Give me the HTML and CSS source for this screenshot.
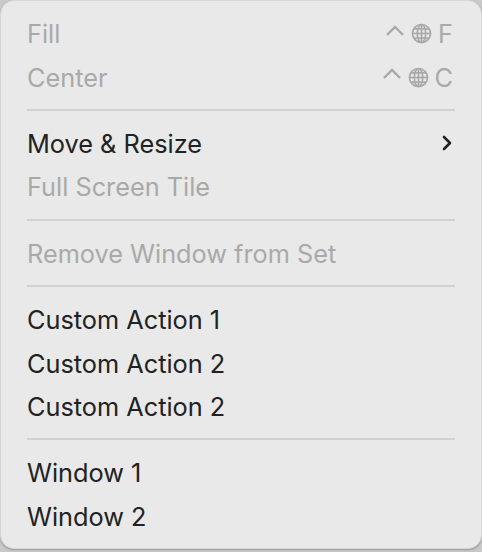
FILE: index.html
```html
<!DOCTYPE html>
<html lang="en">
<head>
  <meta charset="UTF-8">
  <title>Window menu</title>
  <link rel="stylesheet" href="styles.css">
</head>
<body>
  <!-- Context menu -->
  <div class="menu">
    <div class="menu-item disabled">
      <span class="label">Fill</span>
      <span class="shortcut">
        <svg class="caret" viewBox="0 0 20 12"><polyline points="2,10 10,2 18,10"/></svg>
        <svg class="globe" viewBox="0 0 20 20"><circle cx="10" cy="10" r="8.6"/><ellipse cx="10" cy="10" rx="4" ry="8.6"/><line x1="10" y1="1.4" x2="10" y2="18.6"/><line x1="1.4" y1="10" x2="18.6" y2="10"/><line x1="2.8" y1="5.6" x2="17.2" y2="5.6"/><line x1="2.8" y1="14.4" x2="17.2" y2="14.4"/></svg>
        <span class="key">F</span>
      </span>
    </div>
    <div class="menu-item disabled">
      <span class="label">Center</span>
      <span class="shortcut">
        <svg class="caret" viewBox="0 0 20 12"><polyline points="2,10 10,2 18,10"/></svg>
        <svg class="globe" viewBox="0 0 20 20"><circle cx="10" cy="10" r="8.6"/><ellipse cx="10" cy="10" rx="4" ry="8.6"/><line x1="10" y1="1.4" x2="10" y2="18.6"/><line x1="1.4" y1="10" x2="18.6" y2="10"/><line x1="2.8" y1="5.6" x2="17.2" y2="5.6"/><line x1="2.8" y1="14.4" x2="17.2" y2="14.4"/></svg>
        <span class="key">C</span>
      </span>
    </div>
    <div class="separator"></div>
    <div class="menu-item">
      <span class="label">Move &amp; Resize</span>
      <svg class="chevron" viewBox="0 0 12 18"><polyline points="3,3 9,9 3,15"/></svg>
    </div>
    <div class="menu-item disabled">
      <span class="label">Full Screen Tile</span>
    </div>
    <div class="separator"></div>
    <div class="menu-item disabled">
      <span class="label">Remove Window from Set</span>
    </div>
    <div class="separator"></div>
    <div class="menu-item"><span class="label">Custom Action 1</span></div>
    <div class="menu-item"><span class="label">Custom Action 2</span></div>
    <div class="menu-item"><span class="label">Custom Action 2</span></div>
    <div class="separator"></div>
    <div class="menu-item"><span class="label">Window 1</span></div>
    <div class="menu-item"><span class="label">Window 2</span></div>
  </div>
</body>
</html>
```

FILE: styles.css
```css
:root {
  --menu-bg: #e9e9e9;
  --outer-bg: #c9c9c9;
  --text-color: #222;
  --disabled-color: #a9a9a9;
  --separator-color: #d2d2d2;
}

body {
  margin: 0;
  padding: 0;
  background: var(--outer-bg);
  font-family: 'Inter', 'Liberation Sans', sans-serif;
  height: 552px;
  overflow: hidden;
}

.menu {
  box-sizing: border-box;
  width: 482px;
  height: 549px;
  padding: 11px 0 10px;
  background: var(--menu-bg);
  border: 1px solid #d6d6d6;
  border-radius: 14px;
  box-shadow: 0 1px 2px rgba(0, 0, 0, 0.25);
  display: flex;
  flex-direction: column;
}

.menu-item {
  height: 44px;
  padding: 0 28px 0 26px;
  display: flex;
  align-items: center;
  justify-content: space-between;
  font-size: 25.3px;
  color: var(--text-color);
}

.menu-item.disabled {
  color: var(--disabled-color);
}

.shortcut {
  display: flex;
  align-items: center;
  gap: 6px;
}

.caret {
  width: 20px;
  height: 12px;
  margin-bottom: 6px;
  fill: none;
  stroke: var(--disabled-color);
  stroke-width: 2.4;
}

.globe {
  width: 21px;
  height: 21px;
  fill: none;
  stroke: var(--disabled-color);
  stroke-width: 1.6;
}

.chevron {
  width: 12px;
  height: 18px;
  fill: none;
  stroke: var(--text-color);
  stroke-width: 2.6;
  stroke-linecap: round;
  stroke-linejoin: round;
}

.separator {
  height: 2px;
  margin: 10px 26px 11px;
  background: var(--separator-color);
}
```
